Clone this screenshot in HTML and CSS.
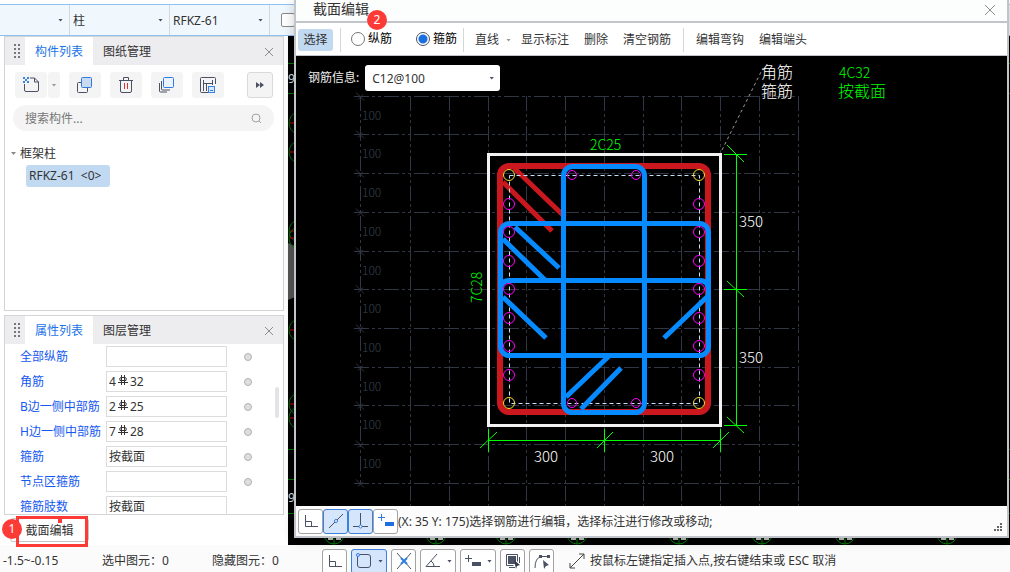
FILE: index.html
```html
<!DOCTYPE html>
<html lang="zh-CN">
<head>
    <meta charset="UTF-8">
    <meta name="viewport" content="width=device-width, initial-scale=1.0">
    <title>截面编辑</title>
    <link rel="stylesheet" href="styles.css">
</head>
<body>

    <header class="topbar">
        <div class="select floor"><select aria-label="楼层"><option></option></select></div>
        <div class="select"><select aria-label="构件类型"><option>柱</option></select></div>
        <div class="select"><select aria-label="构件"><option>RFKZ-61</option></select></div>
        <input type="checkbox" class="top-check" aria-label="选项">
    </header>

    <main>
        <aside>
            <section class="panel list-panel">
                <div class="tabs">
                    <span class="grip"></span>
                    <button class="tab active">构件列表</button>
                    <button class="tab">图纸管理</button>
                    <button class="close" aria-label="关闭"><svg width="10" height="10"><path d="M1 1l8 8M9 1l-8 8"/></svg></button>
                </div>
                <div class="tools">
                    <div class="split">
                        <button class="tool" aria-label="新建">
                            <svg width="18" height="18" viewBox="0 0 18 18"><path d="M2.500 8v6q0 1.500 1.500 1.500h11q1.500 0 1.500-1.500V6l-4-4H8M12.500 2v4h4" class="ink"/><path d="M1 1h2v2H1zM5 1h2v2H5zM3 3h2v2H3zM1 5h2v2H1zM5 5h2v2H5z" fill="#3b82e0"/></svg>
                        </button>
                        <button class="tool drop" aria-label="更多新建"><i class="caret"></i></button>
                    </div>
                    <button class="tool" aria-label="复制">
                        <svg width="18" height="18" viewBox="0 0 18 18"><path d="M6 6.500H2.500q-1 0-1 1v8q0 1 1 1h8q1 0 1-1V12" class="ink"/><rect x="5.500" y="1.500" width="10" height="10" rx="1" fill="#c9daf3" stroke="#2f7be0"/></svg>
                    </button>
                    <button class="tool" aria-label="删除">
                        <svg width="18" height="18" viewBox="0 0 18 18"><path d="M2 4.500h14M6.500 4V1.500h5V4M3.500 5v10q0 1.500 1.500 1.500h8q1.500 0 1.500-1.500V5" class="ink"/><path d="M7.500 7v6M10.500 7v6" stroke="#e03030"/></svg>
                    </button>
                    <button class="tool" aria-label="层间复制">
                        <svg width="18" height="18" viewBox="0 0 18 18"><path d="M3.500 5v8q0 1 1 1H12M1.500 7v8q0 1 1 1H9" class="ink"/><rect x="5.500" y="1.500" width="10" height="10" rx="1" fill="#eaf2fd" stroke="#2f7be0"/></svg>
                    </button>
                    <button class="tool" aria-label="存档">
                        <svg width="18" height="18" viewBox="0 0 18 18"><path d="M9 16.500H2.500q-1 0-1-1v-13q0-1 1-1h13q1 0 1 1V8M4.500 4v11M4.500 7.500h9M13.500 4v5M7.500 8v7" class="ink"/><rect x="9.500" y="10.500" width="6" height="6" fill="#d8e8fc" stroke="#3b82e0"/><path d="M11 14.500h3" stroke="#3b82e0"/></svg>
                    </button>
                    <button class="tool more" aria-label="展开"><svg width="8" height="6"><path d="M0 0l4 3-4 3zM4 0l4 3-4 3z" fill="#4a5163"/></svg></button>
                </div>
                <div class="search">
                    <input type="text" placeholder="搜索构件..." aria-label="搜索构件">
                    <svg width="11" height="11" fill="none" stroke="#a2a2a2"><circle cx="5" cy="5" r="4"/><path d="M8 8l2 2"/></svg>
                </div>
                <ul class="tree">
                    <li><i class="caret"></i>框架柱
                        <ul><li class="picked">RFKZ-61 &nbsp;&lt;0&gt;</li></ul>
                    </li>
                </ul>
            </section>

            <section class="panel prop-panel">
                <div class="tabs">
                    <span class="grip"></span>
                    <button class="tab active">属性列表</button>
                    <button class="tab">图层管理</button>
                    <button class="close" aria-label="关闭"><svg width="10" height="10"><path d="M1 1l8 8M9 1l-8 8"/></svg></button>
                </div>
                <div class="props">
                    <label for="p1">全部纵筋</label><div class="field"><input id="p1" type="text"></div><i class="dot"></i>
                    <label for="p2">角筋</label><div class="field rebar"><input id="p2" type="text" value="4"><svg width="10" height="10"><use href="#rebar"/></svg><input type="text" value="32" aria-label="直径"></div><i class="dot"></i>
                    <label for="p3">B边一侧中部筋</label><div class="field rebar"><input id="p3" type="text" value="2"><svg width="10" height="10"><use href="#rebar"/></svg><input type="text" value="25" aria-label="直径"></div><i class="dot"></i>
                    <label for="p4">H边一侧中部筋</label><div class="field rebar"><input id="p4" type="text" value="7"><svg width="10" height="10"><use href="#rebar"/></svg><input type="text" value="28" aria-label="直径"></div><i class="dot"></i>
                    <label for="p5">箍筋</label><div class="field"><input id="p5" type="text" value="按截面"></div><i class="dot"></i>
                    <label for="p6">节点区箍筋</label><div class="field"><input id="p6" type="text"></div><i class="dot"></i>
                    <label for="p7">箍筋肢数</label><div class="field"><input id="p7" type="text" value="按截面"></div>
                </div>
                <span class="thumb"></span>
            </section>

            <div class="actions">
                <button class="section-edit">截面编辑</button>
                <span class="mark-box"></span>
                <span class="badge one">1</span>
            </div>
        </aside>

        <div class="model">
            <svg id="model" viewBox="288 36 722 509" preserveAspectRatio="xMinYMin slice"></svg>
        </div>
    </main>

    <footer class="statusbar">
        <span class="coord">-1.5~-0.15</span>
        <span class="count">选中图元：0</span>
        <span class="hidden-count">隐藏图元：0</span>
        <div class="snaps">
            <button class="snap" aria-label="正交"><svg width="16" height="16"><path d="M2.500 2v11.500H15M3 8.500h5.500v5" class="ink"/></svg></button>
            <button class="snap wide on" aria-label="捕捉"><svg width="18" height="16"><path d="M5 1.500h8q2.500 0 2.500 2.500v8q0 2.500-2.500 2.500H5q-2.500 0-2.500-2.500V4" class="ink"/><circle cx="3" cy="2" r="1.500" fill="#d5e5fb" stroke="#2f7be0"/></svg><i class="caret"></i></button>
            <button class="snap" aria-label="交点"><svg width="18" height="16"><path d="M2 0l14 16M16 0L2 16" class="ink"/><path d="M6 5l6 6M12 5l-6 6" stroke="#2f7be0" stroke-width="2"/></svg></button>
            <button class="snap wide" aria-label="角度"><svg width="18" height="16"><path d="M13 1L2 13.500h14M7 8q3 2 3 5" class="ink"/></svg><i class="caret"></i></button>
            <button class="snap wide" aria-label="偏移"><svg width="18" height="16"><path d="M1 5.500h7M4.500 2v7" class="ink"/><path d="M8 9h9v4H8z" fill="#4a5163"/></svg><i class="caret"></i></button>
            <button class="snap" aria-label="点选"><svg width="16" height="16"><path d="M3 3h8v8H3z" fill="#4a5163"/><path d="M1.500 1.500h11v7M1.500 1.500v11h7M4 14.500h6M14.500 4v6" class="ink"/><path d="M9 7l6 5-3 1-1 3z" fill="#333b4d"/></svg></button>
            <button class="snap" aria-label="折线"><svg width="18" height="16"><path d="M2 15q0-10 6-11.500h7" class="ink"/><path d="M6 2h3v3H6zM14 2h3v3h-3zM10 7l6 5-3 1-2 3z" fill="#4a5163"/></svg></button>
        </div>
        <svg class="resize" width="16" height="16"><path d="M1 15L15 1M10 1h5v5M1 10v5h5" fill="none" stroke="#444"/></svg>
        <span>按鼠标左键指定插入点,按右键结束或 ESC 取消</span>
    </footer>

    <section class="dialog">
        <div class="title">
            <h1>截面编辑</h1>
            <button class="close" aria-label="关闭"><svg width="12" height="12"><path d="M1 1l10 10M11 1L1 11"/></svg></button>
            <span class="badge two">2</span>
        </div>
        <div class="toolbar">
            <button class="pick">选择</button>
            <span class="sep"></span>
            <label class="first"><input type="radio" name="bar">纵筋</label>
            <label><input type="radio" name="bar" checked>箍筋</label>
            <span class="sep"></span>
            <button class="line">直线<i class="caret"></i></button>
            <button>显示标注</button>
            <button>删除</button>
            <button>清空钢筋</button>
            <span class="sep"></span>
            <button>编辑弯钩</button>
            <button>编辑端头</button>
        </div>
        <div class="drawing">
            <svg viewBox="296 56 711 450" preserveAspectRatio="xMinYMin meet">
                <g id="grid"></g>
                <path d="M722 150L763 68" stroke="#999" stroke-dasharray="3 3" fill="none"/>
                <rect x="488.500" y="154.500" width="232" height="271" fill="none" stroke="#f2f2f2" stroke-width="3"/>
                <g class="stirrup red">
                    <rect x="500" y="166" width="208" height="246" rx="9"/>
                    <path d="M514 168L565 217M503 182L552 231"/>
                </g>
                <path d="M509.500 175.500H699.500V403.500H509.500z" stroke="#c4e2fa" stroke-dasharray="4 3" fill="none"/>
                <g class="stirrup blue">
                    <rect x="500.500" y="223.500" width="208" height="132" rx="9"/>
                    <path d="M500.500 290q0-9.500 9-9.500h190q9 0 9 9.500"/>
                    <rect x="563.500" y="166.500" width="81" height="246" rx="9"/>
                    <path d="M515 227L559 268M503 239L545 280M503 297L546 338M708 296L664 338M609 356L566 397M621 368L581 409"/>
                </g>
                <g id="bars"></g>
                <g class="dims">
                    <path d="M736.500 154V426M724 154.500h23M724 289.500h23M724 425.500h23M488 440.500H721M488.500 429v23M604.500 429v23M720.500 429v23"/>
                    <path d="M727 145l17 17M727 281l17 16M727 417l17 16M480 448l17-16M597 448l16-16M713 448l16-16"/>
                </g>
                <g class="size">
                    <text x="739" y="227">350</text><text x="739" y="363">350</text>
                    <text x="534" y="462">300</text><text x="650" y="462">300</text>
                </g>
                <g class="note">
                    <text x="590" y="150">2C25</text>
                    <text transform="translate(482 303) rotate(-90)">7C28</text>
                    <text x="839" y="78">4C32</text>
                    <text x="838" y="97" class="big">按截面</text>
                    <text x="761" y="78" class="big white">角筋</text>
                    <text x="761" y="97" class="big white">箍筋</text>
                </g>
            </svg>
            <div class="info">
                <label for="info">钢筋信息:</label>
                <div class="select"><select id="info"><option>C12@100</option></select></div>
            </div>
        </div>
        <div class="hint">
            <button class="snap" aria-label="正交"><svg width="16" height="16"><path d="M2.500 2v11.500H15M3 8.500h5.500v5" class="ink"/></svg></button>
            <button class="snap on" aria-label="中点"><svg width="16" height="16"><path d="M1 15L15 1" class="ink"/><circle cx="8" cy="8" r="1.500" fill="#fff" stroke="#2f7be0"/></svg></button>
            <button class="snap on" aria-label="垂足"><svg width="16" height="16"><path d="M7.500 0v13M0 13.500h15" class="ink"/><circle cx="7.500" cy="13.500" r="1.500" fill="#fff" stroke="#2f7be0"/></svg></button>
            <button class="snap" aria-label="偏移"><svg width="18" height="16"><path d="M1 4.500h7M4.500 1v7" stroke="#2f7be0"/><path d="M8 9h9v4H8z" fill="#1d6fe0"/></svg></button>
            <span>(X: 35 Y: 175)选择钢筋进行编辑，选择标注进行修改或移动;</span>
            <svg class="corner" width="9" height="9" fill="#666"><path d="M6 0h2v2H6zM3 3h2v2H3zM6 3h2v2H6zM0 6h2v2H0zM3 6h2v2H3zM6 6h2v2H6z"/></svg>
        </div>
    </section>

    <svg class="defs" aria-hidden="true">
        <symbol id="rebar" viewBox="0 0 10 10"><path d="M0 7.500h10M2 5.500q-1-3 1-3h4q2 0 1 3zM3.500 0v10M6.500 0v10" fill="none" stroke="#333"/></symbol>
    </svg>

    <script src="drawing.js"></script>
</body>
</html>
```
FILE: styles.css
```css
* {
    box-sizing: border-box;
}

body {
    margin: 0;
    height: 100vh;
    display: flex;
    flex-direction: column;
    position: relative;
    overflow: hidden;
    font-family: "Noto Sans", "Noto Sans CJK SC", sans-serif;
    font-size: 12px;
    line-height: 16px;
    color: #333;
    background-color: #fff;
}

button, input, select {
    font: inherit;
    color: inherit;
    margin: 0;
    padding: 0;
    border: none;
    background: none;
}

button {
    display: flex;
    align-items: center;
    justify-content: center;
    white-space: nowrap;
}

.defs {
    position: absolute;
    width: 0;
    height: 0;
}

.ink {
    fill: none;
    stroke: #4a5163;
}

button svg {
    fill: none;
    flex: none;
}

.caret, .select::after {
    width: 5px;
    height: 3px;
    background-color: #4a5163;
    clip-path: polygon(0 0, 100% 0, 50% 100%);
}

.select {
    display: grid;
    align-items: center;
}

.select select, .select::after {
    grid-area: 1 / 1;
}

.select select {
    appearance: none;
    width: 100%;
    height: 100%;
    padding-top: 1px;
}

.select::after {
    content: "";
    justify-self: end;
    margin-right: 6px;
    pointer-events: none;
}

/* top bar */
.topbar {
    flex: none;
    display: flex;
    align-items: center;
    height: 32px;
    margin-top: 4px;
    border-top: 1px solid #8fc1f5;
    border-bottom: 1px solid #8fc1f5;
    background-color: #f0f8fd;
}

.topbar .select {
    width: 100px;
    height: 100%;
    border-right: 1px solid #d3d8dd;
}

.topbar .floor {
    width: 70px;
}

.topbar select {
    padding-left: 3px;
}

.top-check {
    appearance: none;
    width: 14px;
    height: 14px;
    margin-left: 11px;
    border: 1px solid #888;
    border-radius: 2px;
    background-color: #fff;
}

/* side panels */
main {
    flex: 1;
    min-height: 0;
    display: flex;
}

aside {
    flex: none;
    width: 288px;
    display: flex;
    flex-direction: column;
    padding: 0 4px;
}

.panel {
    border: 1px solid #d4d4d6;
    background-color: #fff;
    overflow: hidden;
}

.list-panel {
    flex: 1;
    min-height: 0;
    margin-bottom: 4px;
}

.prop-panel {
    flex: none;
    height: 200px;
    position: relative;
}

.tabs {
    display: flex;
    align-items: center;
    height: 28px;
    background-color: #ededf0;
}

.grip {
    width: 8px;
    height: 16px;
    margin: 0 4px 0 8px;
    background-image: radial-gradient(circle, #777 1px, transparent 1px);
    background-size: 4px 4px;
}

.tab {
    height: 28px;
    padding: 2px 10px 0;
}

.tab.active {
    background-color: #fff;
    color: #1a73e8;
}

.close {
    margin-left: auto;
    padding: 2px 9px 0;
}

.close svg {
    stroke: #8c8c8c;
}

.tools {
    display: flex;
    gap: 9px;
    padding: 7px 10px;
}

.split {
    display: flex;
    gap: 1px;
}

.tool {
    width: 32px;
    height: 26px;
    border-radius: 3px;
    background-color: #f4f4f4;
}

.drop {
    width: 12px;
}

.drop .caret {
    background-color: #999;
}

.more {
    width: 26px;
    margin-left: auto;
    border: 1px solid #d9d9d9;
}

.search {
    display: flex;
    align-items: center;
    height: 26px;
    margin: 0 9px 0 8px;
    padding: 1px 12px 0;
    border-radius: 13px;
    background-color: #f4f4f4;
}

.search input {
    flex: 1;
    min-width: 0;
}

.search input::placeholder {
    color: #777;
}

.tree, .tree ul {
    list-style: none;
    margin: 0;
    padding: 0;
}

.tree {
    padding: 15px 0 0 15px;
    position: relative;
}

.tree > li > .caret {
    position: absolute;
    left: 6px;
    top: 21px;
    background-color: #888;
}

.tree .picked {
    width: 84px;
    margin: 3px 0 0 6px;
    padding: 3px;
    height: 22px;
    border-radius: 3px;
    background-color: #c2d9f2;
    white-space: nowrap;
}

.props {
    display: grid;
    grid-template-columns: 86px 121px 1fr;
    grid-auto-rows: 21px;
    row-gap: 4px;
    align-items: center;
    padding: 2px 0 0 15px;
}

.props label {
    padding-top: 1px;
    color: #1558f0;
    white-space: nowrap;
}

.field {
    display: flex;
    align-items: center;
    height: 21px;
    padding: 0 2px;
    border: 1px solid #dcdcdc;
}

.field input {
    width: 100%;
    min-width: 0;
}

.rebar {
    gap: 2px;
}

.rebar svg {
    flex: none;
    margin-bottom: 4px;
}

.rebar input:first-child {
    flex: none;
    width: 7px;
}

.dot {
    width: 8px;
    height: 8px;
    margin-left: 17px;
    border: 1px solid #b2b2b2;
    border-radius: 50%;
    background-color: #dedede;
}

.thumb {
    position: absolute;
    right: 4px;
    top: 71px;
    width: 4px;
    height: 31px;
    border-radius: 2px;
    background-color: #e4e4e6;
}

.actions {
    flex: none;
    position: relative;
    height: 30px;
    padding: 3px 6px;
}

.section-edit {
    width: 79px;
    height: 24px;
    padding-top: 2px;
    border: 1px solid #c6c6c6;
    border-radius: 3px;
    background-color: #fff;
}

.mark-box {
    position: absolute;
    left: 12px;
    top: 1px;
    width: 72px;
    height: 31px;
    border: 3px solid #fc3a36;
}

.mark-box::after {
    content: "";
    position: absolute;
    left: 39px;
    top: 0;
    width: 4px;
    height: 4px;
    background-color: #fc3a36;
}

.badge {
    position: absolute;
    width: 20px;
    height: 20px;
    border-radius: 50%;
    background-color: #fc3a36;
    color: #fff;
    line-height: 20px;
    text-align: center;
}

.one {
    left: -2px;
    top: 4px;
}

.model {
    flex: 1;
    min-width: 0;
    background-color: #000;
}

.model svg {
    display: block;
    width: 100%;
    height: 100%;
}

.model text {
    font-size: 12px;
    fill: #ddd;
}

/* bottom status bar */
.statusbar {
    flex: none;
    display: flex;
    align-items: center;
    height: 27px;
    padding: 4px 3px 0;
    background-color: #fbfbfb;
    white-space: nowrap;
}

.coord {
    width: 99px;
}

.count {
    width: 110px;
}

.hidden-count {
    width: 110px;
}

.snaps {
    display: flex;
    gap: 4px;
    height: 24px;
}

.snap {
    flex: none;
    width: 25px;
    height: 25px;
    border: 1px solid #a3a3a3;
    border-radius: 3px;
    background-color: #fff;
}

.snap.wide {
    width: 36px;
    gap: 5px;
}

.snap.on {
    border-color: #3a80dd;
    background-color: #d5e5fb;
}

.resize {
    margin: 0 5px 0 15px;
}

/* section editor */
.dialog {
    position: absolute;
    left: 294px;
    right: 1px;
    top: 0;
    bottom: 34px;
    display: flex;
    flex-direction: column;
    border: 2px solid #c1c4ca;
    border-top: none;
    background-color: #fff;
    box-shadow: 0 2px 12px rgba(0, 0, 0, 0.2);
}

.title {
    flex: none;
    display: flex;
    align-items: center;
    height: 23px;
    padding: 0 2px 4px 17px;
    border-bottom: 2px solid #c1c4ca;
    background-color: #fcfdfd;
    position: relative;
}

.title h1 {
    margin: 0;
    font-size: 14px;
    font-weight: normal;
    line-height: 16px;
}

.two {
    left: 71px;
    top: 10px;
}

.toolbar {
    flex: none;
    display: flex;
    align-items: center;
    gap: 15px;
    height: 33px;
    padding: 2px 0 0 2px;
    border-bottom: 1px solid #c1c4ca;
}

.toolbar label {
    display: flex;
    align-items: center;
    gap: 3px;
    margin-bottom: 2px;
    color: #000;
}

.toolbar .first {
    margin-left: -5px;
    margin-right: 9px;
}

.toolbar input {
    appearance: none;
    width: 14px;
    height: 14px;
    border: 1px solid #777;
    border-radius: 50%;
}

.toolbar input:checked {
    border-color: #4a5163;
    background-image: radial-gradient(circle, #1a6fe0 4px, transparent 5px);
}

.pick {
    width: 35px;
    height: 22px;
    margin-right: -8px;
    border-radius: 3px;
    background-color: #c2d9f2;
}

.sep {
    width: 1px;
    height: 24px;
    background-color: #d6d6d6;
}

label + .sep {
    margin-left: -9px;
}

.toolbar .line {
    gap: 7px;
    margin-left: -4px;
    margin-right: -5px;
}

.line .caret {
    background-color: #999;
}

.sep:nth-last-of-type(1) {
    margin-left: -3px;
    margin-right: -3px;
}

.drawing {
    flex: 1;
    min-height: 0;
    position: relative;
    background-color: #000;
}

.drawing > svg {
    display: block;
    width: 100%;
    height: 100%;
    font-family: "Noto Sans CJK SC", sans-serif;
    font-weight: 300;
}

.info {
    position: absolute;
    left: 12px;
    top: 9px;
    display: flex;
    align-items: center;
    gap: 6px;
    color: #eee;
}

.info .select {
    width: 135px;
    height: 26px;
    border-radius: 3px;
    background-color: #fff;
    color: #333;
}

.info select {
    padding-left: 7px;
}

.grid-lines {
    fill: none;
    stroke: #303643;
    stroke-dasharray: 15 3 3 3 3 3;
}

.grid-ticks {
    fill: none;
    stroke: #303643;
}

#grid text {
    font-size: 12px;
    fill: #3a404e;
}

.stirrup {
    fill: none;
    stroke-width: 5;
}

.red {
    stroke: #cb181f;
}

.red rect {
    stroke-width: 6;
}

.blue {
    stroke: #058aff;
}

#bars circle {
    fill: none;
    stroke: #f0f;
}

#bars .corner-bar {
    stroke: #ffe030;
}

.dims {
    fill: none;
    stroke: #0f0;
}

.size {
    font-size: 15px;
    fill: #fff;
}

.note {
    font-size: 14px;
    fill: #0f0;
}

.note .big {
    font-size: 16px;
}

.note .white {
    fill: #fff;
}

.hint {
    flex: none;
    display: flex;
    align-items: center;
    height: 30px;
    padding: 0 4px 0 2px;
    background-color: #fcfcfc;
    white-space: nowrap;
}

.hint span {
    padding-top: 1px;
}

.corner {
    margin-left: auto;
    align-self: flex-end;
    margin-bottom: 4px;
}
```
FILE: drawing.js
```js
let grid = document.getElementById('grid');
let bars = document.getElementById('bars');
let model = document.getElementById('model');

// background grid, one cell is 100mm
let xs = [410.5, 449.5, 488.5, 526.5, 565.5, 604.5, 643.5, 681.5, 720.5, 759.5, 798.5];
let ys = [96.5, 134.5, 173.5, 212.5, 251.5, 289.5, 328.5, 367.5, 405.5, 444.5, 483.5];
let lines = 'M360.5 96V484';
let ticks = '';
let labels = '';

xs.forEach(x => lines += `M${x} 96V506`);
ys.forEach((y, i) => {
    lines += `M354 ${y}H799`;
    ticks += `M356 ${y - 4}l8 8M358 ${y + 3}l5-5`;
    if (i < ys.length - 1) {
        labels += `<text x="362" y="${Math.round(y + 23)}">100</text>`;
    }
});
grid.innerHTML = `<path class="grid-lines" d="${lines}"/><path class="grid-ticks" d="${ticks}"/>${labels}`;

// rebar positions
let circles = '';
[509, 699].forEach(x => {
    [175, 403].forEach(y => circles += `<circle class="corner-bar" cx="${x}" cy="${y}" r="5.5"/>`);
    [204, 232, 261, 289, 318, 346, 375].forEach(y => circles += `<circle cx="${x}" cy="${y}" r="5.5"/>`);
});
[572, 636].forEach(x => {
    [175, 403].forEach(y => circles += `<circle cx="${x}" cy="${y}" r="4.5"/>`);
});
bars.innerHTML = circles;

// plan view behind the dialog
let plan = '<path d="M288 243l7 3v51l-7 3z" fill="#555"/>';
[63, 93, 449, 479, 513].forEach(y => plan += `<path d="M288 ${y + 0.5}h722" stroke="#007000"/>`);
[123, 152, 231, 238, 330, 404, 418].forEach(y => {
    plan += `<ellipse cx="297" cy="${y}" rx="8" ry="10" fill="none" stroke="#007000"/><path d="M290 ${y}h8" stroke="#d00000"/>`;
});
[334, 436, 506, 577, 679, 762, 845, 947].forEach(x => {
    plan += `<circle cx="${x}" cy="534" r="10" fill="none" stroke="#008000"/><path d="M${x} 536v8" stroke="#008000"/><path d="M${x - 6} 539h5M${x + 2} 539h5" stroke="#bbb" stroke-width="2"/>`;
});
plan += '<text x="288" y="83">9</text><text x="288" y="502">9</text>';
model.innerHTML = plan;
```
